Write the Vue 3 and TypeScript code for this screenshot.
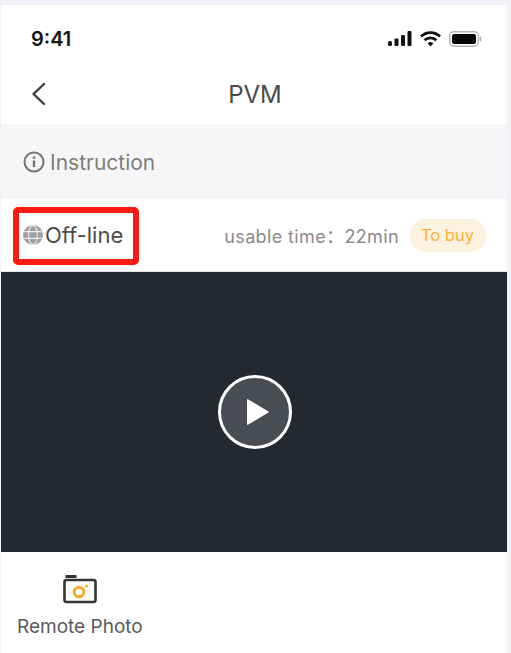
<template>
  <div class="page">
    <div class="status-bar">
      <span class="clock">9:41</span>
      <div class="status-icons">
        <svg width="24" height="15" viewBox="0 0 24 15">
          <rect x="0" y="10" width="4" height="5" rx="1.5" fill="#111" />
          <rect x="6.5" y="7.5" width="4" height="7.5" rx="1" fill="#111" />
          <rect x="13" y="4" width="4" height="11" rx="1" fill="#111" />
          <rect x="19.5" y="0" width="4" height="15" rx="1" fill="#111" />
        </svg>
        <svg width="21" height="16" viewBox="0 0 21 16" fill="none" stroke="#111" stroke-width="2.8">
          <path d="M1 5.6a13.5 13.5 0 0 1 19 0" />
          <path d="M4.6 9.2a8.4 8.4 0 0 1 11.8 0" />
          <path d="M10.5 15.5l-2.9-3.3a4.4 4.4 0 0 1 5.8 0z" fill="#111" stroke="none" />
        </svg>
        <svg width="33" height="16" viewBox="0 0 33 16">
          <rect x="0.8" y="0.8" width="28.4" height="14.4" rx="4" fill="none" stroke="#b5b5b5" stroke-width="1.4" />
          <rect x="3" y="3" width="24" height="10" rx="2.2" fill="#050505" />
          <rect x="30.6" y="5.5" width="1.6" height="5" rx="0.8" fill="#b5b5b5" />
        </svg>
      </div>
    </div>

    <div class="nav-bar">
      <svg class="back" width="15" height="24" viewBox="0 0 15 24" fill="none" stroke="#3c3c3c" stroke-width="2.4" stroke-linecap="round" stroke-linejoin="round">
        <path d="M13 2L2.5 12 13 22" />
      </svg>
      <span class="nav-title">PVM</span>
    </div>

    <div class="instruction">
      <svg width="22" height="22" viewBox="0 0 22 22" fill="none" stroke="#757575" stroke-width="2">
        <circle cx="11" cy="11" r="9.5" />
        <path d="M11 9.5v6.5" stroke-width="2.4" />
        <path d="M11 5.4v2.4" stroke-width="2.4" />
      </svg>
      <span>Instruction</span>
    </div>

    <div class="state-row">
      <div class="state">
        <svg width="20" height="20" viewBox="0 0 20 20">
          <circle cx="10" cy="10" r="10" fill="#a0a0a0" />
          <g fill="none" stroke="#eee" stroke-width="1.1">
            <ellipse cx="10" cy="10" rx="4.4" ry="9.6" />
            <path d="M1.4 6.6h17.2M1.4 13.4h17.2" />
          </g>
        </svg>
        <span>Off-line</span>
      </div>
      <div class="usage">
        <span class="usage-text">usable time：22min</span>
        <span class="buy">To buy</span>
      </div>
      <div class="highlight"></div>
    </div>

    <div class="video">
      <button class="play" type="button">
        <svg width="24" height="28" viewBox="0 0 24 28">
          <path d="M1.5 1.5L22.5 14 1.5 26.5z" fill="#fff" stroke="#fff" stroke-width="1" stroke-linejoin="round" />
        </svg>
      </button>
    </div>

    <div class="tools">
      <div class="tool">
        <svg width="34" height="29" viewBox="0 0 34 29" fill="none">
          <rect x="2.5" y="0" width="11" height="3" fill="#333" />
          <rect x="1.5" y="5" width="31" height="22" rx="2" stroke="#363636" stroke-width="2.6" />
          <circle cx="16" cy="17" r="4.8" stroke="#fbab2c" stroke-width="3" />
          <circle cx="23.5" cy="11" r="1.5" fill="#fbab2c" />
        </svg>
        <span>Remote Photo</span>
      </div>
    </div>
  </div>
</template>

<script setup lang="ts">
</script>

<style>
html,
body {
  margin: 0;
  background: #f1f2f7;
}
</style>

<style scoped>
.page {
  box-sizing: border-box;
  width: 511px;
  height: 653px;
  padding: 5px 4px 0 1px;
  background: #f1f2f7;
  font-family: "Inter", "Liberation Sans", sans-serif;
  overflow: hidden;
}

.status-bar {
  height: 63px;
  padding: 4px 25px 0 30px;
  box-sizing: border-box;
  display: flex;
  justify-content: space-between;
  align-items: center;
  background: #fff;
}

.clock {
  font-size: 20px;
  font-weight: 600;
  color: #151515;
}

.status-icons {
  display: flex;
  align-items: center;
  gap: 8px;
}

.nav-bar {
  height: 56px;
  position: relative;
  display: flex;
  align-items: center;
  justify-content: center;
  padding-bottom: 3px;
  box-sizing: border-box;
  background: #fff;
}

.back {
  position: absolute;
  left: 30px;
  top: 14px;
}

.nav-title {
  margin-left: 2px;
  font-size: 24px;
  color: #4a4a4a;
}

.instruction {
  height: 75px;
  padding: 1px 0 0 22px;
  box-sizing: border-box;
  display: flex;
  align-items: center;
  gap: 5px;
  background: #f6f6f9;
  color: #7d7d7d;
  font-size: 21px;
}

.state-row {
  height: 72px;
  position: relative;
  padding: 0 21px 0 22px;
  box-sizing: border-box;
  display: flex;
  justify-content: space-between;
  align-items: center;
  background: #fff;
}

.state {
  display: flex;
  align-items: center;
  gap: 2px;
  color: #4c4c4c;
  font-size: 22px;
}

.usage {
  display: flex;
  align-items: center;
  gap: 11px;
}

.usage-text {
  color: #8a8a8a;
  font-family: "Inter", "Noto Sans CJK SC", sans-serif;
  font-size: 18px;
  letter-spacing: 0.37px;
}

.buy {
  height: 33px;
  padding: 0 12px 0 11px;
  display: flex;
  align-items: center;
  border-radius: 17px;
  background: #fdf1df;
  color: #fbb03c;
  font-size: 16.5px;
}

.highlight {
  position: absolute;
  left: 12px;
  top: 8px;
  width: 126px;
  height: 58px;
  box-sizing: border-box;
  border: 6px solid #fb1a14;
  border-radius: 5px;
}

.video {
  height: 281px;
  border-top: 1px solid #e4e4e6;
  padding-left: 2px;
  box-sizing: border-box;
  display: flex;
  align-items: center;
  justify-content: center;
  background: #252831;
}

.play {
  width: 74px;
  height: 74px;
  padding: 0 0 0 5px;
  display: flex;
  align-items: center;
  justify-content: center;
  border: 3px solid #fff;
  border-radius: 50%;
  background: #4a4c53;
}

.tools {
  height: 101px;
  padding: 23px 0 0 16px;
  box-sizing: border-box;
  background: #fff;
}

.tool {
  display: inline-flex;
  flex-direction: column;
  align-items: center;
  gap: 11px;
  color: #5a5a5a;
  font-size: 19px;
}
</style>
